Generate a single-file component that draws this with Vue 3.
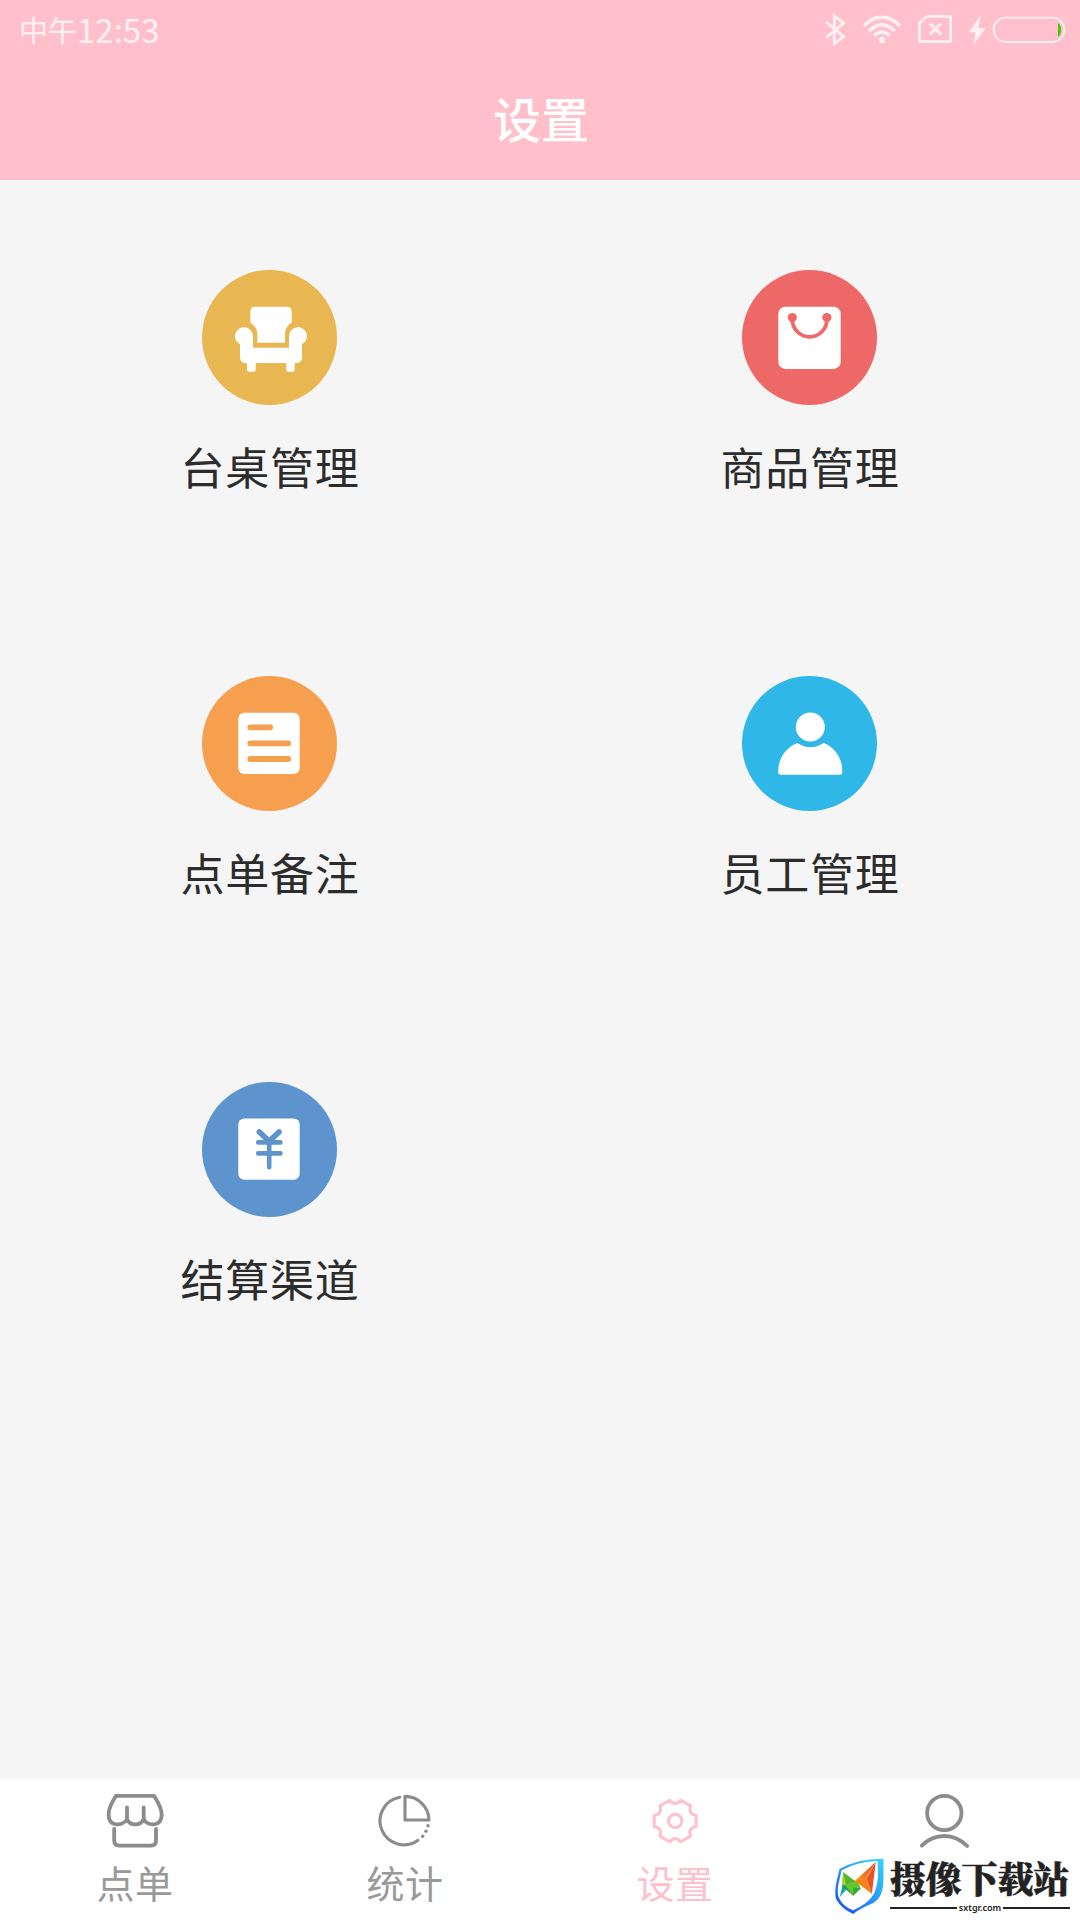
<template>
  <div class="page">
    <header class="header">
      <div class="status">
        <div class="time"><span>中午</span><span class="digits">12:53</span></div>
        <div class="status-icons">
          <svg class="bluetooth" viewBox="72 0 66 180">
            <path d="M78 66L131 110L103 131V48L131 70L78 113" fill="none" stroke="currentColor" stroke-width="8.5" />
          </svg>
          <svg class="wifi" viewBox="186 0 120 180">
            <g fill="none" stroke="currentColor" stroke-width="10.5">
              <path d="M191 78Q246 25 300 78" />
              <path d="M207 93Q246 56 284 93" />
              <path d="M222 107Q246 85 269 107" />
            </g>
            <circle cx="246" cy="120" r="9.5" fill="currentColor" />
          </svg>
          <svg class="sim" viewBox="351 0 108 180">
            <g fill="none" stroke="currentColor">
              <path d="M380 49H449Q452 49 452 52V122Q452 125 449 125H361Q358 125 358 122V70Z" stroke-width="8" />
              <path d="M390 71L423 103M423 71L390 103" stroke-width="9" />
            </g>
          </svg>
          <svg class="bolt" viewBox="504 0 54 180">
            <path d="M542 46L506 97H527L520 134L557 84H535Z" fill="currentColor" />
          </svg>
          <svg class="battery" viewBox="576 0 222 180">
            <rect x="581" y="53" width="212" height="73" rx="36.5" fill="none" stroke="currentColor" stroke-width="5.5" />
            <path d="M774 69Q783 74 783 90T774 110Z" fill="#43c800" />
          </svg>
        </div>
      </div>
      <h1 class="title">设置</h1>
    </header>

    <main class="grid">
      <div v-for="item in items" :key="item.icon" class="cell">
        <svg class="cell-icon" :class="item.icon" viewBox="0 0 135 135">
          <circle cx="67.5" cy="67.5" r="67.5" fill="currentColor" />
          <g v-if="item.icon === 'sofa'" fill="#fff">
            <path d="M53 36.7H85Q89.7 36.7 89.7 41.5V52.5Q83 57 83 64V72.7H55.3V64Q55.3 57 48.3 52.5V41.5Q48.3 36.7 53 36.7Z" />
            <path d="M51 77.7H87V66A9 9 0 1 1 100 74.3V87Q100 93 94 93H92.7V99.5Q92.7 101.7 90.5 101.7H86.5Q84.3 101.7 84.3 99.5V93H53.7V99.5Q53.7 101.7 51.5 101.7H47.3Q45 101.7 45 99.5V93H44Q38 93 38 87V74.3A9 9 0 1 1 51 66Z" />
          </g>
          <g v-if="item.icon === 'bag'">
            <rect x="36.3" y="36.7" width="62.4" height="62.2" rx="7" fill="#fff" />
            <circle cx="50.3" cy="47.5" r="4.6" fill="currentColor" />
            <circle cx="84.9" cy="47.5" r="4.6" fill="currentColor" />
            <path d="M50.3 49.5A17.3 17.3 0 0 0 84.9 49.5" fill="none" stroke="currentColor" stroke-width="3.8" />
          </g>
          <g v-if="item.icon === 'note'">
            <rect x="36.3" y="36.7" width="61.4" height="61.2" rx="6" fill="#fff" />
            <path d="M48.3 51.3H68.2M48.3 67.3H86.2M48.3 83H86.2" fill="none" stroke="currentColor" stroke-width="5.8" stroke-linecap="round" />
          </g>
          <g v-if="item.icon === 'staff'" fill="#fff">
            <circle cx="68.3" cy="51" r="14.5" />
            <path d="M55.3 66.9Q68.3 75.3 81.7 66.9C93 71.5 100.3 82 100.3 95V96.5Q100.3 98.7 98 98.7H38.6Q36.3 98.7 36.3 96.5V95C36.3 82 44 71.5 55.3 66.9Z" />
          </g>
          <g v-if="item.icon === 'pay'">
            <rect x="36.3" y="36.5" width="61.4" height="61.2" rx="6" fill="#fff" />
            <g fill="none" stroke="currentColor" stroke-width="4.6" stroke-linecap="round">
              <path d="M56.2 60.4H78.4M56.2 71.4H78.4M67.2 59.3V85.2" />
              <path d="M57.3 50L67.3 59.3L77 50" stroke-width="5.6" />
            </g>
          </g>
        </svg>
        <div class="cell-label">{{ item.label }}</div>
      </div>
    </main>

    <nav class="tabs">
      <div v-for="tab in tabs" :key="tab.icon" class="tab" :class="{ active: tab.active }">
        <svg class="tab-icon" viewBox="0 0 60 60">
          <g v-if="tab.icon === 'store'" stroke-width="3.8">
            <path d="M11 5.8H49C53 12 56.7 19 56.7 24.5C56.7 37.5 42.5 36 38.7 29.5C35 36 25.5 36 22 29.5C17.5 36 3.6 37.5 3.6 24.5C3.6 19 7 12 11 5.8Z" />
            <path d="M22 17.3V29.5M38.7 17.3V29.5" />
            <path d="M9.2 39V50.5Q9.2 55.6 14.3 55.6H46Q51 55.6 51 50.5V39" />
          </g>
          <g v-if="tab.icon === 'chart'" stroke-width="3.1">
            <path d="M24.7 7.2A24 24 0 1 0 43 50.3" />
            <path d="M30 6.4A24 24 0 0 1 54 30H30Z" />
            <g class="dots">
              <circle cx="53" cy="35.7" r="1.7" />
              <circle cx="51" cy="41.2" r="1.7" />
              <circle cx="47.7" cy="46.2" r="1.7" />
            </g>
          </g>
          <g v-if="tab.icon === 'gear'" stroke-width="3">
            <path d="M24.8 10.2Q30.2 16.8 35.7 10.2L45.6 15.9Q42.5 23.8 51.2 25.4V36.6Q42.5 38.2 45.6 46.1L35.7 51.8Q30.2 45.2 24.8 51.8L14.8 46.1Q18 38.2 9.2 36.6V25.4Q18 23.8 14.8 15.9Z" />
            <circle cx="30.2" cy="31" r="6.7" />
          </g>
          <g v-if="tab.icon === 'user'" stroke-width="3.8">
            <circle cx="29.3" cy="23" r="17.2" />
            <path d="M6.8 55.6Q16.5 46 29.3 46T52.2 56" />
          </g>
        </svg>
        <div class="tab-label">{{ tab.label }}</div>
      </div>
    </nav>

    <div class="watermark">
      <svg class="shield" viewBox="40 262 152 174">
        <defs>
          <linearGradient id="shield-edge" x1="1" y1="0" x2="0.2" y2="1">
            <stop offset="0" stop-color="#36d6ff" />
            <stop offset="0.5" stop-color="#2a9df8" />
            <stop offset="1" stop-color="#1f55f5" />
          </linearGradient>
          <linearGradient id="wing" x1="0" y1="0" x2="1" y2="0">
            <stop offset="0" stop-color="#f9a01b" />
            <stop offset="1" stop-color="#ea4a25" />
          </linearGradient>
        </defs>
        <path d="M56 298Q112 266 188 267V325C187 366 180 386 156 401Q118 416 97 433Q62 418 46 389C38 361 50 326 56 298Z" fill="url(#shield-edge)" />
        <path d="M62 302Q110 275 170 274C173 310 173 344 159 373Q142 402 97 422Q66 410 54 384C45 359 58 328 62 302Z" fill="#fff" />
        <path d="M66 340L57 382L78 358Z" fill="#18a5b8" />
        <path d="M67 307L104 335L73 356L64 343Z" fill="#56b52b" />
        <path d="M67 307L76 348L64 343Z" fill="#a6d52c" />
        <path d="M73 346L97 354V378L64 350Z" fill="#249d43" />
        <path d="M73 346L109 333L120 356L97 378Z" fill="#66c630" />
        <path d="M97 354L120 356L97 378Z" fill="#37a935" />
        <path d="M165 277L102 333L126 340Z" fill="url(#wing)" />
        <path d="M102 333L139 324L153 372Z" fill="#fbb01e" />
        <path d="M165 277L137 326L153 372Z" fill="#e9532a" />
        <path d="M102 333L137 326L153 372Z" fill="#f58220" />
      </svg>
      <div class="brand">
        <div class="brand-name">摄像下载站</div>
        <div class="brand-site"><span>sxtgr.com</span></div>
      </div>
    </div>
  </div>
</template>

<script setup>
const items = [
  { icon: 'sofa', label: '台桌管理' },
  { icon: 'bag', label: '商品管理' },
  { icon: 'note', label: '点单备注' },
  { icon: 'staff', label: '员工管理' },
  { icon: 'pay', label: '结算渠道' }
]

const tabs = [
  { icon: 'store', label: '点单' },
  { icon: 'chart', label: '统计' },
  { icon: 'gear', label: '设置', active: true },
  { icon: 'user', label: '' }
]
</script>

<style>
body {
  margin: 0;
}
</style>

<style scoped>
.page {
  position: relative;
  display: flex;
  flex-direction: column;
  width: 1080px;
  height: 1920px;
  overflow: hidden;
  background-color: #f5f5f5;
  font-family: 'Noto Sans CJK SC', sans-serif;
}
svg {
  display: block;
  flex: none;
}
.header {
  height: 180px;
  background-color: #ffc0cb;
  color: #fff;
}
.status {
  display: flex;
  justify-content: space-between;
  height: 60px;
  padding: 0 14px 0 19px;
  color: #fff0f3;
}
.time {
  display: flex;
  font-size: 29px;
  line-height: 58px;
}
.digits {
  font-size: 33px;
}
.status-icons {
  display: flex;
}
.status-icons svg {
  height: 60px;
}
.bluetooth {
  width: 22px;
  margin-right: 16px;
}
.wifi {
  width: 40px;
  margin-right: 15px;
}
.sim {
  width: 36px;
  margin-right: 15px;
}
.bolt {
  width: 18px;
  margin-right: 6px;
}
.battery {
  width: 74px;
}
.title {
  margin: 0;
  padding-left: 2px;
  font-size: 48px;
  font-weight: 500;
  line-height: 115px;
  text-align: center;
}
.grid {
  flex: 1;
  display: grid;
  grid-template-columns: 1fr 1fr;
  grid-auto-rows: 406px;
  align-content: start;
}
.cell {
  display: flex;
  flex-direction: column;
  align-items: center;
  padding-top: 90px;
}
.cell-icon {
  width: 135px;
  height: 135px;
  margin-right: 1px;
}
.sofa {
  color: #e8b751;
}
.bag {
  color: #ee6868;
}
.note {
  color: #f6a04f;
}
.staff {
  color: #2fb8e7;
}
.pay {
  color: #5e94ce;
}
.cell-label {
  margin-top: 28px;
  font-size: 44px;
  letter-spacing: 0.7px;
  line-height: 66px;
  color: #2c2c2c;
}
.tabs {
  display: flex;
  height: 141px;
  background-color: #fff;
}
.tab {
  flex: 1;
  display: flex;
  flex-direction: column;
  align-items: center;
  padding-top: 11px;
  color: #8c8c8c;
}
.tab-icon {
  width: 60px;
  height: 60px;
  fill: none;
  stroke: currentColor;
  stroke-linecap: round;
  stroke-linejoin: round;
}
.dots {
  fill: currentColor;
  stroke: none;
}
.tab-label {
  margin-top: 5px;
  font-size: 38px;
  letter-spacing: 0.5px;
  line-height: 54px;
  color: #999;
}
.active,
.active .tab-label {
  color: #ffc0cb;
}
.watermark {
  position: absolute;
  right: 10px;
  bottom: 5px;
  display: flex;
  align-items: flex-start;
  width: 236px;
  height: 58px;
}
.shield {
  width: 51px;
  height: 58px;
}
.brand {
  margin-left: 5px;
  width: 180px;
}
.brand-name {
  height: 45px;
  font-family: 'Noto Serif CJK SC', 'Noto Sans CJK SC', serif;
  font-size: 35.8px;
  font-weight: 900;
  line-height: 42px;
  white-space: nowrap;
  color: #222;
  -webkit-text-stroke: 0.6px #222;
}
.brand-site {
  display: flex;
  align-items: center;
  height: 12px;
  font-family: 'Noto Sans', sans-serif;
  font-size: 9px;
  font-weight: 600;
  line-height: 12px;
  color: #222;
}
.brand-site::before,
.brand-site::after {
  content: '';
  flex: 1;
  height: 2px;
  background-color: #222;
}
.brand-site span {
  margin: 0 2px;
}
</style>
